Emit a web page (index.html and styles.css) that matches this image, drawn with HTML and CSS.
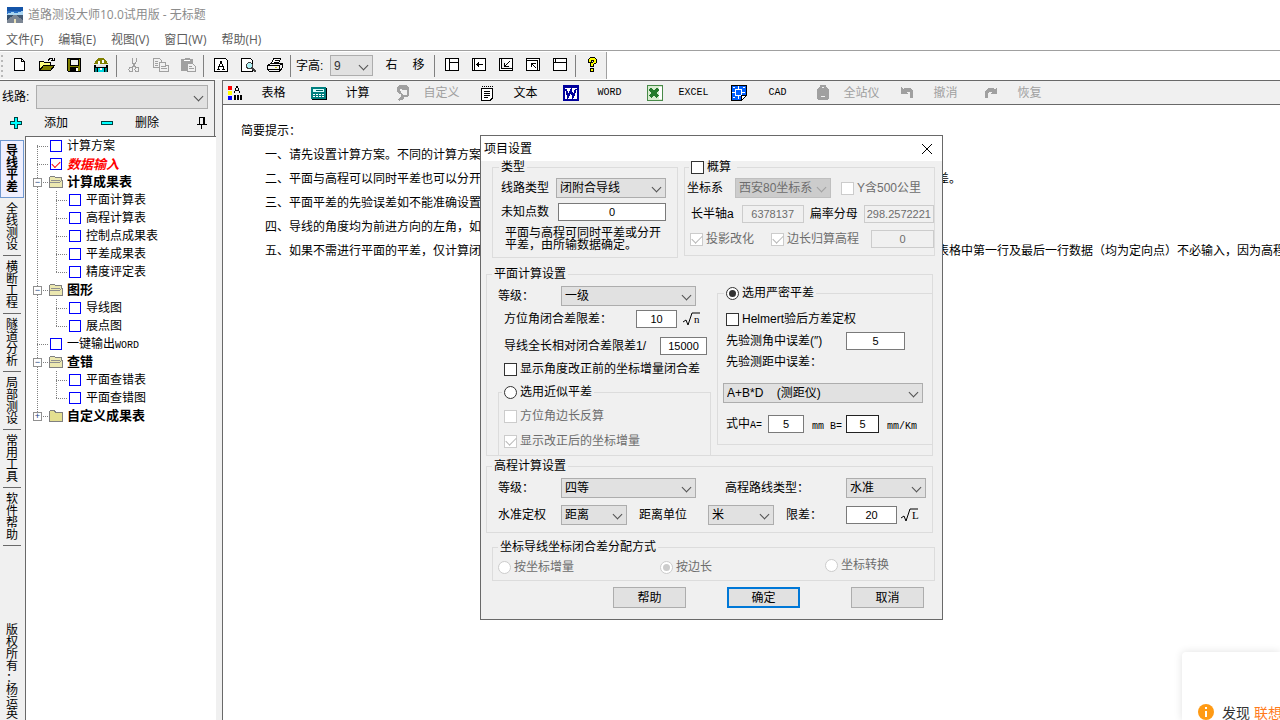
FILE: index.html
```html
<!DOCTYPE html>
<html lang="zh-CN">
<head>
<meta charset="utf-8">
<title>道路测设大师10.0试用版 - 无标题</title>
<link rel="stylesheet" href="styles.css">
</head>
<body>
<header class="titlebar">
  <svg class="app-icon" viewBox="0 0 16 16"><rect width="16" height="16" fill="#2a6fc4"/><rect width="16" height="4" fill="#1454a8"/><path d="M0 7l5-2 4 1 7-2v4H0z" fill="#a9d4f0"/><rect y="8" width="16" height="8" fill="#7c8694"/><path d="M0 8h7L0 13z" fill="#34506e"/><path d="M9 8h7v5z" fill="#445a74"/><path d="M8 8l1 8H7z" fill="#e8dfb8"/></svg>
  <span>道路测设大师10.0试用版 - 无标题</span>
</header>
<nav class="menubar">
  <button>文件(F)</button><button>编辑(E)</button><button>视图(V)</button><button>窗口(W)</button><button>帮助(H)</button>
</nav>
<div class="toolbar-row">
  <div class="toolbar">
    <span class="grip"></span>
    <button aria-label="新建"><svg viewBox="0 0 16 16"><path d="M2.500 1.500h7l3 3v9h-10z" fill="#fff" stroke="#000"/><path d="M9.500 1.500v3h3" fill="none" stroke="#000"/></svg></button>
    <button aria-label="打开"><svg viewBox="0 0 16 16"><path d="M.5 13.500v-9h4l1 1h6v3" fill="#ffff80" stroke="#000"/><path d="M.5 13.500l4-5h11l-4 5z" fill="#808000" stroke="#000"/><path d="M9 3.500l2-2h2l1.500 2M12 3.500h3V1" fill="none" stroke="#000"/></svg></button>
    <button aria-label="保存"><svg viewBox="0 0 16 16"><path d="M1.500 1.500h13v13h-12l-1-1z" fill="#808000" stroke="#000"/><path d="M4 2h8v6H4z" fill="#f0f0f0" stroke="#000"/><path d="M4 10h8v5H4z" fill="#000"/><path d="M10 11h2v3h-2z" fill="#fff"/></svg></button>
    <button aria-label="另存"><svg viewBox="0 0 16 16"><path d="M3 3l3-2h4l3 2 2 4H1z" fill="#808000"/><path d="M5 4h2v3H5zM9 3h2v3H9z" fill="#fff"/><path d="M1 8h14v7H1z" fill="#000"/><path d="M3 8h10v2H3z" fill="#e0e0e0"/><path d="M5 11h6v4H5z" fill="#00d8e0"/><path d="M7 11h2v2H7z" fill="#fff"/><path d="M2 11h2v4H2zM12 11h2v4h-2z" fill="#008080"/></svg></button>
    <span class="sep"></span>
    <button aria-label="剪切" disabled><svg viewBox="0 0 16 16"><path d="M6 1v4l4 6M10 1v4l-4 6" fill="none" stroke="#a0a0a0"/><circle cx="5" cy="12.500" r="2" fill="none" stroke="#a0a0a0"/><circle cx="11" cy="12.500" r="2" fill="none" stroke="#a0a0a0"/></svg></button>
    <button aria-label="复制" disabled><svg viewBox="0 0 16 16"><g fill="#f0f0f0" stroke="#a0a0a0"><path d="M.5 1.500h6l2 2v7h-8z"/><path d="M6.500 5.500h6l3 3v6h-9z"/><path d="M2 4.500h3M2 6.500h3M2 8.500h3M8 9.500h5M8 11.500h6M12.500 5.500v3h3"/></g></svg></button>
    <button aria-label="粘贴" disabled><svg viewBox="0 0 16 16"><path d="M1 2h3l1-1h4l1 1h3v12H1z" fill="#a0a0a0"/><path d="M4 3h6v1H4z" fill="#fff"/><path d="M7.500 6.500h5l3 3v5h-8z" fill="#f0f0f0" stroke="#a0a0a0"/><path d="M9 9.500h3M9 11.500h5" stroke="#a0a0a0"/></svg></button>
    <span class="sep"></span>
    <button aria-label="字体"><svg viewBox="0 0 16 16"><path d="M1.500 1.500h11l2 2v11h-13z" fill="#fff" stroke="#000"/><path d="M4 12.500h3M9 12.500h3M5 12l3-8 3 8M6 9.500h4" fill="none" stroke="#000"/></svg></button>
    <button aria-label="打印预览"><svg viewBox="0 0 16 16"><path d="M1.500 1.500h9l2 2v11h-11z" fill="#fff" stroke="#000"/><circle cx="9.500" cy="8.500" r="3" fill="#aef0f4" stroke="#404040"/><path d="M12 11l3.500 4" stroke="#404040" stroke-width="2"/></svg></button>
    <button aria-label="打印"><svg viewBox="0 0 16 16"><path d="M4.500 6.500l2-5h7l-2 5z" fill="#fff" stroke="#000"/><path d="M8 3.500h4M7 5.500h4" stroke="#000"/><path d="M.5 8.500l3-2h12v4l-3 4H2.500l-2-2z" fill="#f0f0f0" stroke="#000"/><path d="M1 8.500h11.500l3-2M12.500 8.500V14M1 12.500h11" fill="none" stroke="#000"/><path d="M8 10h2v1H8z" fill="#cc0"/></svg></button>
    <span class="sep"></span>
    <label class="size-label" for="fs">字高:</label>
    <span class="pick size"><select id="fs"><option>9</option></select></span>
    <button>右</button><button>移</button>
    <span class="sep"></span>
    <button aria-label="布局一"><svg viewBox="0 0 16 16"><path d="M1.500 1.500h13v12h-13zM5.500 1.500v12M5.500 5.500h9" fill="#fff" stroke="#000"/></svg></button>
    <button aria-label="布局二"><svg viewBox="0 0 16 16"><path d="M1.500 1.500h13v12h-13zM3.500 1.500v12M12 7.500H6M8 5.500l-2 2 2 2" fill="#fff" stroke="#000"/></svg></button>
    <button aria-label="布局三"><svg viewBox="0 0 16 16"><path d="M1.500 1.500h13v12h-13zM3.500 1.500v10h11M11.500 4.500l-5 5M6.500 5.500v4h4" fill="#fff" stroke="#000"/></svg></button>
    <button aria-label="布局四"><svg viewBox="0 0 16 16"><path d="M1.500 1.500h13v12h-13zM1.500 3.500h11v10M6.500 6.500l5 5M6.500 10v-3.500h4" fill="#fff" stroke="#000"/></svg></button>
    <button aria-label="布局五"><svg viewBox="0 0 16 16"><path d="M1.500 1.500h13v12h-13zM1.500 5.500h13M3.500 1.500v4" fill="#fff" stroke="#000"/></svg></button>
    <span class="sep"></span>
    <button aria-label="帮助"><svg viewBox="0 0 16 16"><path d="M3.500 5.500v-3l2-2h4l2 2v3l-3 2v2h-3v-3l3-2v-1h-2v2z" fill="#ff0" stroke="#000"/><rect x="5.500" y="11.500" width="3" height="3" fill="#ff0" stroke="#000"/></svg></button>
  </div>
</div>

<div class="workspace">
  <aside class="side">
    <div class="side-head">
      <div class="route"><label for="route">线路:</label><span class="pick"><select id="route"><option></option></select></span></div>
      <div class="actions">
        <button><svg class="i16" viewBox="0 0 16 16"><path d="M6.500 2.500h3v4h4v3h-4v4h-3v-4h-4v-3h4z" fill="#0ff" stroke="#004040"/></svg><span>添加</span></button>
        <button><svg class="i16" viewBox="0 0 16 16"><path d="M2.500 6.500h11v3h-11z" fill="#0ff" stroke="#004040"/></svg><span>删除</span></button>
        <button class="pin" aria-label="固定"><svg class="i16" viewBox="0 0 16 16"><path d="M5.500 9V2.500h5V9M9.500 3v6M3 9.500h10M7.500 10v4" fill="none" stroke="#000"/></svg></button>
      </div>
    </div>
    <div class="side-body">
      <nav class="tabs">
        <button class="active">导线平差</button><button>全线测设</button><button>横断工程</button><button>隧道分析</button><button>局部测设</button><button>常用工具</button><button>软件帮助</button>
        <p class="copyright">版权所有：杨运英</p>
      </nav>
      <ul class="tree">
        <li><i class="g1 first"></i><label><input type="checkbox">计算方案</label></li>
        <li><i class="g1"></i><label class="hot"><input type="checkbox" checked>数据输入</label></li>
        <li class="group"><i class="g1"><b class="exp">−</b></i><svg class="folder" viewBox="0 0 16 14"><path d="M1.500 12.500v-10l1-1h4l1 1h6v3h1v7z" fill="#ece8b0" stroke="#808080"/><path d="M1.500 7.500h10l2-2M3 5.500h9" fill="none" stroke="#909090"/></svg>计算成果表</li>
        <li><i class="g1 v"></i><i class="g2"></i><label><input type="checkbox">平面计算表</label></li>
        <li><i class="g1 v"></i><i class="g2"></i><label><input type="checkbox">高程计算表</label></li>
        <li><i class="g1 v"></i><i class="g2"></i><label><input type="checkbox">控制点成果表</label></li>
        <li><i class="g1 v"></i><i class="g2"></i><label><input type="checkbox">平差成果表</label></li>
        <li><i class="g1 v"></i><i class="g2 last"></i><label><input type="checkbox">精度评定表</label></li>
        <li class="group"><i class="g1"><b class="exp">−</b></i><svg class="folder" viewBox="0 0 16 14"><path d="M1.500 12.500v-10l1-1h4l1 1h6v3h1v7z" fill="#ece8b0" stroke="#808080"/><path d="M1.500 7.500h10l2-2M3 5.500h9" fill="none" stroke="#909090"/></svg>图形</li>
        <li><i class="g1 v"></i><i class="g2"></i><label><input type="checkbox">导线图</label></li>
        <li><i class="g1 v"></i><i class="g2 last"></i><label><input type="checkbox">展点图</label></li>
        <li><i class="g1"></i><label><input type="checkbox"><span>一键输出<span class="mono">WORD</span></span></label></li>
        <li class="group"><i class="g1"><b class="exp">−</b></i><svg class="folder" viewBox="0 0 16 14"><path d="M1.500 12.500v-10l1-1h4l1 1h6v3h1v7z" fill="#ece8b0" stroke="#808080"/><path d="M1.500 7.500h10l2-2M3 5.500h9" fill="none" stroke="#909090"/></svg>查错</li>
        <li><i class="g1 v"></i><i class="g2"></i><label><input type="checkbox">平面查错表</label></li>
        <li><i class="g1 v"></i><i class="g2 last"></i><label><input type="checkbox">平面查错图</label></li>
        <li class="group"><i class="g1 last"><b class="exp">+</b></i><svg class="folder" viewBox="0 0 16 14"><path d="M1.500 12.500v-10l1-1h4l1 2h7v9z" fill="#e4df90" stroke="#808080"/></svg>自定义成果表</li>
      </ul>
    </div>
  </aside>

  <main class="main">
    <div class="views">
      <button><svg class="i16" viewBox="0 0 16 16"><path d="M1 1h4v4H1z" fill="#f00"/><path d="M1 6h4v4H1z" fill="#ff0"/><path d="M1 11h4v4H1z" fill="#00f"/><path d="M7 8l3-7 3 7M8 5.500h4" fill="none" stroke="#000"/><path d="M7 10h2v5H7zM10 10h2v5h-2zM13 10h2v5h-2z"/></svg><span>表格</span></button>
      <button><svg class="i16" viewBox="0 0 16 16"><path d="M0 2h15v12H0z" fill="#008080"/><path d="M15 3h1v12H1v-1h14z"/><path d="M2 4h11v3H2z" fill="#d8ffff"/><path d="M5 5h7v1H5z" fill="#006060"/><path d="M2 9.500h11M2 11.500h11" stroke="#fff" stroke-dasharray="2 1"/></svg><span>计算</span></button>
      <button disabled><svg class="i16" viewBox="0 0 16 16"><path d="M2 2l3-2h6l3 2v8l-2 2H9v2l-5 2-1-2 3-2V9H4L2 6z" fill="#a0a0a0"/><path d="M5 4h2v1h5v4l-1 1H8l-1-2H6z" fill="#f0f0f0"/></svg><span>自定义</span></button>
      <button><svg class="i16" viewBox="0 0 16 16"><path d="M2.500 3v12h9l2-2V3z" fill="#fff" stroke="#000"/><path d="M3 1.500h11M2 3.500h12" stroke="#000" stroke-dasharray="1 1"/><path d="M5 6.500h6M5 8.500h6M5 10.500h6M5 12.500h4" stroke="#000"/></svg><span>文本</span></button>
      <button><svg class="i16" viewBox="0 0 16 16"><path d="M0 0h16v16H0z" fill="#00009c"/><path d="M2 3h12v11H2z" fill="#fff"/><path d="M3 4l2 8 3-7 2 7 3-8" fill="none" stroke="#00009c" stroke-width="2"/></svg><span class="mono">WORD</span></button>
      <button><svg class="i16" viewBox="0 0 16 16"><path d="M.5.5h15v15H.5z" fill="#d8ecd0" stroke="#488a48"/><path d="M12 2h3v12h-3z" fill="#fff"/><path d="M3 4l8 8M11 4l-8 8" stroke="#247a2c" stroke-width="3"/></svg><span class="mono">EXCEL</span></button>
      <button><svg class="i16" viewBox="0 0 16 16"><path d="M.5.5h15v10l-5 5H.5z" fill="#0060ff" stroke="#000"/><path d="M4.500 4.500h6v6h-6zM7.500 1v3M7.500 11v3M1 7.500h3M11 7.500h3M2 2.500h2M12 2.500h2M2 12.500h2" fill="none" stroke="#fff"/><path d="M15.500 10.500h-5v5z" fill="#fff" stroke="#000"/></svg><span class="mono">CAD</span></button>
      <button disabled><svg class="i16" viewBox="0 0 16 16"><path d="M5 0h6v2h1l2 3v9l-2 1H4l-2-1V5l2-3h1z" fill="#a0a0a0"/><path d="M7 2h2v1H7zM6 11h4v1H6z" fill="#f0f0f0"/></svg><span>全站仪</span></button>
      <button disabled><svg class="i16" viewBox="0 0 16 16"><path d="M2 2v7h7L7 7h3l1 1v5h3V6l-3-3H6L4 4z" fill="#a0a0a0"/></svg><span>撤消</span></button>
      <button disabled><svg class="i16" viewBox="0 0 16 16"><path d="M14 2v7H7l2-2H6L5 8v5H2V6l3-3h5l2 1z" fill="#a0a0a0"/></svg><span>恢复</span></button>
    </div>
    <article class="tips">
      <h1>简要提示：</h1>
      <p>一、请先设置计算方案。不同的计算方案</p>
      <p>二、平面与高程可以同时平差也可以分开平差，分开平差时请在类型中选择相应的线路，并输入相应数据，然后分别进行各项平差。</p>
      <p>三、平面平差的先验误差如不能准确设置</p>
      <p>四、导线的角度均为前进方向的左角，如</p>
      <p>五、如果不需进行平面的平差，仅计算闭合差，则只需在数据输入表格中输入已知的点号、角度以及边长等各项观测数据即可，表格中第一行及最后一行数据（均为定向点）不必输入，因为高程</p>
    </article>
  </main>
</div>

<form class="dialog" role="dialog" aria-label="项目设置">
  <div class="dlg-title"><span>项目设置</span><button type="button" aria-label="关闭"><svg viewBox="0 0 12 12"><path d="M1 1l10 10M11 1L1 11" stroke="#000" fill="none"/></svg></button></div>
  <div class="dlg-body">
    <div class="top-pair">
      <fieldset class="kind">
        <legend>类型</legend>
        <div class="line"><label for="k1">线路类型</label><span class="pick"><select id="k1"><option>闭附合导线</option></select></span></div>
        <div class="line"><label for="k2">未知点数</label><input type="text" id="k2" value="0"></div>
        <p>平面与高程可同时平差或分开平差，由所输数据确定。</p>
      </fieldset>
      <fieldset class="rough">
        <legend><label class="opt"><input type="checkbox">概算</label></legend>
        <div class="line"><label for="r1">坐标系</label><span class="pick off"><select id="r1" disabled><option>西安80坐标系</option></select></span><label class="opt dim"><input type="checkbox" disabled>Y含500公里</label></div>
        <div class="line axis"><label for="r2">长半轴a</label><input type="text" id="r2" value="6378137" disabled><label for="r3">扁率分母</label><input type="text" id="r3" value="298.2572221" disabled></div>
        <div class="line proj"><label class="opt dim"><input type="checkbox" checked disabled>投影改化</label><label class="opt dim"><input type="checkbox" checked disabled>边长归算高程</label><input type="text" aria-label="高程" value="0" disabled></div>
      </fieldset>
    </div>

    <fieldset class="plane">
      <legend>平面计算设置</legend>
      <div class="plane-cols">
        <div class="plane-left">
          <div class="line grade"><label for="p1">等级：</label><span class="pick"><select id="p1"><option>一级</option></select></span></div>
          <div class="line angle"><label for="p2">方位角闭合差限差：</label><input type="text" id="p2" value="10"><span class="root"><svg viewBox="0 0 20 16"><path d="M0 11l3-2 2 5 4-12h8" fill="none" stroke="#000"/></svg><span>n</span></span></div>
          <div class="line total"><label for="p3">导线全长相对闭合差限差1/</label><input type="text" id="p3" value="15000"></div>
          <label class="opt show"><input type="checkbox">显示角度改正前的坐标增量闭合差</label>
          <fieldset class="approx">
            <legend><label class="opt"><input type="radio" name="adj">选用近似平差</label></legend>
            <label class="opt dim"><input type="checkbox" disabled>方位角边长反算</label>
            <label class="opt dim"><input type="checkbox" checked disabled>显示改正后的坐标增量</label>
          </fieldset>
        </div>
        <fieldset class="strict">
          <legend><label class="opt"><input type="radio" name="adj" checked>选用严密平差</label></legend>
          <label class="opt"><input type="checkbox">Helmert验后方差定权</label>
          <div class="line sigma"><label for="s1">先验测角中误差(″)</label><input type="text" id="s1" value="5"></div>
          <label class="dist" for="s2">先验测距中误差：</label>
          <span class="pick wide"><select id="s2"><option>A+B*D &nbsp; &nbsp;(测距仪)</option></select></span>
          <div class="line ab"><label for="s3">式中<span class="mono">A=</span></label><input type="text" id="s3" value="5"><span class="mono">mm</span><label class="mono" for="s4">B=</label><input type="text" class="focus" id="s4" value="5"><span class="mono">mm/Km</span></div>
        </fieldset>
      </div>
    </fieldset>

    <fieldset class="height">
      <legend>高程计算设置</legend>
      <div class="line h1"><label for="h1">等级：</label><span class="pick"><select id="h1"><option>四等</option></select></span><label for="h2">高程路线类型：</label><span class="pick"><select id="h2"><option>水准</option></select></span></div>
      <div class="line h2"><label for="h3">水准定权</label><span class="pick"><select id="h3"><option>距离</option></select></span><label for="h4">距离单位</label><span class="pick"><select id="h4"><option>米</option></select></span><label for="h5">限差：</label><input type="text" id="h5" value="20"><span class="root"><svg viewBox="0 0 20 16"><path d="M0 11l3-2 2 5 4-12h8" fill="none" stroke="#000"/></svg><span>L</span></span></div>
    </fieldset>

    <fieldset class="alloc">
      <legend>坐标导线坐标闭合差分配方式</legend>
      <div class="alloc-row">
        <label class="opt dim"><input type="radio" name="al" disabled>按坐标增量</label>
        <label class="opt dim"><input type="radio" name="al" checked disabled>按边长</label>
        <label class="opt dim"><input type="radio" name="al" disabled>坐标转换</label>
      </div>
    </fieldset>
    <div class="buttons"><button type="button">帮助</button><button type="button" class="primary">确定</button><button type="button">取消</button></div>
  </div>
</form>

<div class="toast"><svg viewBox="0 0 16 16"><circle cx="8" cy="8" r="8" fill="#ff9a14"/><path d="M7 3h2v2H7zM7 7h2v6H7z" fill="#fff"/></svg><span>发现</span><a href="#">联想</a></div>
</body>
</html>
```
FILE: styles.css
```css
* { box-sizing: border-box; }
body {
  margin: 0;
  height: 100vh;
  display: flex;
  flex-direction: column;
  overflow: hidden;
  position: relative;
  background: #fff;
  color: #000;
  font: 12px/14px "Liberation Sans", "Noto Sans CJK SC", sans-serif;
  white-space: nowrap;
}
button, input, select { font: inherit; color: inherit; margin: 0; }
button { background: none; border: 0; padding: 0; }
p, ul, h1 { margin: 0; padding: 0; }
svg { display: block; flex: none; shape-rendering: crispEdges; }
.i16 { width: 16px; height: 16px; }
.mono { font-family: "Liberation Mono", monospace; font-size: 10px; line-height: 12px; }

.titlebar {
  height: 28px;
  flex: none;
  display: flex;
  align-items: center;
  gap: 5px;
  padding: 1px 0 0 7px;
  color: #8c8c8c;
  font-family: "Open Sans", "Noto Sans CJK SC", sans-serif;
}
.app-icon { width: 16px; height: 16px; }
.menubar {
  height: 23px;
  flex: none;
  display: flex;
  align-items: center;
  gap: 15px;
  padding: 2px 0 0 6px;
  border-bottom: 1px solid #a0a0a0;
  color: #5c5c5c;
  font-family: "Open Sans", "Noto Sans CJK SC", sans-serif;
}

.toolbar-row { display: flex; flex: none; height: 29px; padding: 1px 0; }
.toolbar {
  display: flex;
  align-items: center;
  background: #f0f0f0;
  border-right: 1px solid #a0a0a0;
}
.toolbar button { width: 27px; height: 24px; display: flex; align-items: center; justify-content: center; padding-bottom: 2px; }
.toolbar button svg { width: 16px; height: 16px; }
.grip { width: 6px; height: 24px; background: radial-gradient(circle at 2px 2px, #b8b8b8 1px, transparent 1px) 0 0 / 6px 5px; }
.sep { width: 6px; height: 22px; background: linear-gradient(#808080, #808080) 2px 0 / 1px 22px no-repeat; }
.size-label { width: 36px; padding-left: 2px; }
.pick.size { width: 43px; height: 21px; margin-right: 5px; color: #333; }

.pick { position: relative; display: block; height: 20px; }
.pick select {
  appearance: none;
  display: block;
  width: 100%;
  height: 100%;
  padding: 0 18px 0 3px;
  border: 1px solid #adadad;
  border-radius: 0;
  background: #e1e1e1;
  opacity: 1;
}
.pick::after {
  content: "";
  position: absolute;
  right: 6px;
  top: 50%;
  width: 6px;
  height: 6px;
  margin-top: -4px;
  border: solid #505050;
  border-width: 0 1px 1px 0;
  transform: rotate(45deg);
  pointer-events: none;
}
.pick.off select { background: #ccc; border-color: #bfbfbf; color: #6d6d6d; }
.pick.off::after { border-color: #a0a0a0; }

.workspace { flex: 1; min-height: 0; display: flex; background: #f0f0f0; }
.side { width: 216px; flex: none; display: flex; flex-direction: column; margin-right: 6px; }
.side-head { width: 215px; height: 56px; border-top: 1px solid #696969; border-right: 1px solid #696969; padding-top: 4px; }
.route { display: flex; align-items: center; padding: 0 6px 0 2px; }
.route label { width: 34px; }
.route .pick { flex: 1; height: 24px; }
.actions { display: flex; align-items: center; height: 27px; padding-left: 8px; }
.actions button { display: flex; align-items: center; gap: 20px; width: 91px; }
.actions .pin { width: 16px; margin-left: 4px; }
.side-body { flex: 1; min-height: 0; display: flex; }
.tabs { width: 24px; margin-right: 1px; flex: none; padding-top: 4px; display: flex; flex-direction: column; align-items: center; overflow: hidden; }
.tabs button, .copyright { font-size: 12px; line-height: 12px; white-space: normal; line-break: anywhere; }
.tabs button { width: 18px; height: 58px; flex: none; padding: 0 3px; border-bottom: 1px solid #696969; }
.tabs .active { width: 24px; padding: 0 5px; border: 1px solid #7098d0; background: #f0f0ff; font-weight: bold; }
.copyright { width: 12px; margin-top: 78px; }
.tree { flex: 1; list-style: none; background: #fff; border: solid #696969; border-width: 1px 0 0 1px; padding-left: 7px; }
.tree li { height: 18px; display: flex; align-items: center; }
.tree label { display: flex; align-items: center; gap: 5px; padding-left: 2px; }
.tree input { appearance: none; width: 12px; height: 12px; border: 1px solid #00f; background: #fff; display: grid; place-items: center; }
.tree input:checked::after { content: ""; width: 7px; height: 4px; margin-top: -2px; border: solid #f00; border-width: 0 0 1px 1px; transform: rotate(-45deg); }
.tree .hot { color: #f00; font: italic bold 13px/14px "Noto Sans CJK SC", sans-serif; }
.tree .group { font-weight: bold; font-size: 13px; }
.folder { width: 16px; height: 14px; margin-right: 3px; }
.g1, .g2 { flex: none; height: 18px; font-style: normal; display: flex; align-items: center; background-repeat: no-repeat; }
.g1 {
  width: 15px;
  background-image: repeating-linear-gradient(#808080 0 1px, transparent 1px 2px), repeating-linear-gradient(90deg, #808080 0 1px, transparent 1px 2px);
  background-size: 1px 18px, 11px 1px;
  background-position: 4px 0, 4px 9px;
}
.g1.v { background-size: 1px 18px, 0 0; }
.g1.last { background-size: 1px 9px, 11px 1px; }
.g1.first { background-size: 1px 10px, 11px 1px; background-position: 4px 8px, 4px 9px; }
.g2 {
  width: 19px;
  background-image: repeating-linear-gradient(#808080 0 1px, transparent 1px 2px), repeating-linear-gradient(90deg, #808080 0 1px, transparent 1px 2px);
  background-size: 1px 18px, 11px 1px;
  background-position: 8px 0, 8px 9px;
}
.g2.last { background-size: 1px 10px, 11px 1px; }
.exp { width: 9px; height: 9px; border: 1px solid #909090; background: #fff; color: #204080; font: 9px/7px "Liberation Sans", sans-serif; text-align: center; }

.main { flex: 1; min-width: 0; background: #fff; border: solid #696969; border-width: 1px 0 0 1px; overflow: hidden; }
.views { height: 24px; display: flex; background: #f0f0f0; border-bottom: 1px solid #696969; padding-left: 4px; overflow: hidden; }
.views button { width: 84px; flex: none; display: flex; align-items: center; }
.views span { width: 61px; text-align: center; }
.views button:disabled { color: #a0a0a0; }
.tips { padding: 13px 0 0 18px; font-family: "Noto Sans CJK SC", sans-serif; line-height: 24px; }
.tips h1 { font: inherit; }
.tips p { padding-left: 24px; }

.dialog { position: absolute; left: 480px; top: 135px; width: 463px; border: 1px solid #696969; background: #f0f0f0; }
.dlg-title { height: 25px; margin-bottom: -1px; background: #fff; display: flex; align-items: center; justify-content: space-between; padding: 0 9px 0 3px; }
.dlg-title svg { width: 12px; height: 12px; shape-rendering: auto; }
.dlg-body { padding: 0 9px 11px 5px; }
fieldset { margin: 0; padding: 0; border: 1px solid #dcdcdc; min-width: 0; }
legend { height: 14px; padding: 0 2px; margin: 0; }
.line { display: flex; align-items: center; }
.dialog input[type="text"] {
  height: 18px;
  min-width: 0;
  padding: 0 2px;
  border: 1px solid #7a7a7a;
  background: #fff;
  font-size: 11px;
  text-align: center;
}
.dialog input[type="text"]:disabled { border-color: #ccc; background: #f0f0f0; color: #6d6d6d; }
.dialog input.focus { border-color: #222; }
.opt { display: flex; align-items: center; gap: 3px; }
.dim { color: #6d6d6d; }
.opt input { appearance: none; width: 13px; height: 13px; flex: none; border: 1px solid #333; background: #fff; display: grid; place-items: center; }
.opt input[type="radio"] { border-radius: 50%; }
.opt input:disabled { border-color: #ccc; }
.opt input[type="checkbox"]:checked::after { content: ""; width: 9px; height: 5px; margin-top: -3px; border: solid #b8b8b8; border-width: 0 0 1px 1px; transform: rotate(-45deg); }
.opt input[type="radio"]:checked::after { content: ""; width: 7px; height: 7px; border-radius: 50%; background: #333; }
.opt input[type="radio"]:disabled:checked::after { background: #ccc; }

.top-pair { display: flex; align-items: flex-start; justify-content: space-between; padding-left: 6px; margin-right: -2px; }
.kind { width: 186px; padding: 4px 11px 6px 8px; }
.kind legend { margin-left: -2px; }
.kind .line { justify-content: space-between; margin-bottom: 5px; }
.kind .pick { width: 110px; }
.kind input { width: 108px; }
.kind p { width: 157px; margin: 6px 0 0 4px; line-height: 12px; white-space: normal; line-break: anywhere; }
.rough { width: 251px; padding: 4px 0 7px 2px; }
.rough legend { margin-left: 2px; padding-right: 6px; }
.rough .line:first-of-type { gap: 10px; }
.rough .pick { width: 96px; margin-left: 2px; }
.rough .axis { margin: 7px 0; padding-left: 4px; gap: 6px; }
.axis input:nth-of-type(1) { width: 62px; margin-left: 2px; }
.axis input:nth-of-type(2) { flex: 1; }
.proj { padding-left: 3px; }
.proj .opt + .opt { margin-left: 17px; }
.proj input[type="text"] { flex: 1; margin-left: 12px; }

.plane { margin-top: 9px; }
.plane legend, .height legend { margin-left: 5px; }
.plane-cols { display: grid; grid-template-columns: 224px 1fr; column-gap: 6px; margin-bottom: -1px; }
.plane-left { padding-top: 5px; }
.grade { padding-left: 11px; }
.grade label, .height .line > label:first-child { width: 63px; }
.grade .pick { width: 135px; }
.angle { padding-left: 17px; margin-top: 4px; }
.angle label { width: 132px; }
.angle input { width: 41px; }
.root { display: flex; align-items: flex-start; margin-left: 6px; height: 16px; }
.root svg { width: 20px; height: 16px; shape-rendering: auto; }
.root span { font: 11px/16px "Liberation Serif", serif; margin-left: -9px; }
.total { padding-left: 17px; margin-top: 9px; }
.total label { width: 156px; }
.total input { width: 47px; }
.show { height: 16px; padding-left: 17px; margin: 6px 0 8px; }
.approx { margin-left: 11px; padding: 10px 0 8px 5px; border-bottom: 0; }
.plane .approx legend { margin-left: -2px; }
.approx > .opt { height: 14px; }
.approx > .opt + .opt { margin-top: 11px; }
.strict { margin: 5px -1px 11px 0; padding: 11px 9px 11px 5px; }
.plane .strict legend { margin-left: 1px; }
.strict > .opt { height: 16px; margin-left: 3px; }
.sigma { margin: 5px 0 4px 3px; }
.sigma label { width: 120px; }
.sigma input { width: 59px; }
.dist { display: block; line-height: 16px; margin: 0 0 13px 3px; }
.strict .wide { margin-bottom: 12px; }
.ab { padding-left: 3px; height: 18px; }
.ab > label:first-child { width: 42px; }
.ab input { width: 36px; }
.ab input.focus { width: 33px; }
.ab > .mono { margin: 6px 0 0 8px; }
.ab > label.mono { margin: 6px 4px 0 6px; }

.height { margin-top: 3px; padding: 5px 6px 7px 11px; }
.plane + .height legend { margin-left: -6px; }
.height .h1 { margin-bottom: 7px; }
.h1 .pick { width: 135px; }
.h1 label + .pick:last-child { width: 80px; }
.h1 .pick + label { width: 121px; margin-left: 29px; }
.h2 .pick { width: 66px; }
.h2 .pick + label { width: 69px; margin-left: 12px; }
.height .h2 label[for="h5"] { width: 60px; }
.h2 input { width: 51px; }
.h2 .root { margin-left: 4px; }
.alloc { margin: 7px -2px 6px 6px; }
.alloc legend { margin-left: 5px; }
.alloc-row { display: grid; grid-template-columns: 162px 165px 1fr; padding: 6px 0 6px 5px; }
.alloc-row .opt:last-child { margin-top: -4px; }
.buttons { display: flex; padding-left: 127px; }
.buttons button { width: 73px; height: 21px; border: 1px solid #adadad; background: #e1e1e1; }
.buttons .primary { border: 2px solid #0078d7; margin: 0 51px 0 41px; }

.toast {
  position: absolute;
  right: 0;
  bottom: 0;
  width: 98px;
  height: 68px;
  padding: 52px 0 0 16px;
  display: flex;
  align-items: flex-start;
  overflow: hidden;
  border-radius: 4px 0 0 0;
  background: #fff;
  box-shadow: 0 0 8px rgba(0, 0, 0, .12);
  font: 14px/17px "Noto Sans CJK SC", sans-serif;
  color: #333;
}
.toast svg { width: 16px; height: 16px; margin-right: 8px; shape-rendering: auto; }
.toast a { margin-left: 4px; color: #ff7a1a; text-decoration: none; }
```
